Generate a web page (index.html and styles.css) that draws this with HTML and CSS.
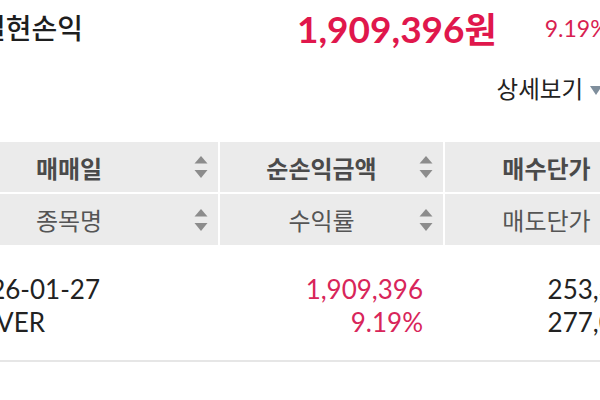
FILE: index.html
```html
<!DOCTYPE html>
<html lang="ko">
<head>
<meta charset="utf-8">
<title>실현손익</title>
<link rel="stylesheet" href="styles.css">
</head>
<body>
<div class="page">
  <div class="summary">
    <div class="title">실현손익</div>
    <div class="amount">1,909,396<span class="won">원</span></div>
    <div class="rate">9.19%</div>
  </div>
  <div class="detail">
    <span class="detail-label">상세보기</span>
    <svg class="detail-caret" width="12" height="9" viewBox="0 0 12 9"><polygon points="0,0 12,0 6,9" fill="#7f8e9c"/></svg>
  </div>
  <div class="table">
    <div class="th strong"><span class="label">매매일</span><svg class="sort" width="14" height="22" viewBox="0 0 14 22"><polygon points="7,0 13.5,7.5 0.5,7.5"/><polygon points="0.5,14 13.5,14 7,22"/></svg></div>
    <div class="th strong"><span class="label">순손익금액</span><svg class="sort" width="14" height="22" viewBox="0 0 14 22"><polygon points="7,0 13.5,7.5 0.5,7.5"/><polygon points="0.5,14 13.5,14 7,22"/></svg></div>
    <div class="th strong"><span class="label">매수단가</span><svg class="sort" width="14" height="22" viewBox="0 0 14 22"><polygon points="7,0 13.5,7.5 0.5,7.5"/><polygon points="0.5,14 13.5,14 7,22"/></svg></div>
    <div class="th"><span class="label">종목명</span><svg class="sort" width="14" height="22" viewBox="0 0 14 22"><polygon points="7,0 13.5,7.5 0.5,7.5"/><polygon points="0.5,14 13.5,14 7,22"/></svg></div>
    <div class="th"><span class="label">수익률</span><svg class="sort" width="14" height="22" viewBox="0 0 14 22"><polygon points="7,0 13.5,7.5 0.5,7.5"/><polygon points="0.5,14 13.5,14 7,22"/></svg></div>
    <div class="th"><span class="label">매도단가</span><svg class="sort" width="14" height="22" viewBox="0 0 14 22"><polygon points="7,0 13.5,7.5 0.5,7.5"/><polygon points="0.5,14 13.5,14 7,22"/></svg></div>
    <div class="td first"><div>2026-01-27</div><div>NAVER</div></div>
    <div class="td num red"><div>1,909,396</div><div>9.19%</div></div>
    <div class="td num last"><div>253,375</div><div>277,000</div></div>
  </div>
</div>
</body>
</html>
```
FILE: styles.css
```css
html, body {
  margin: 0;
  padding: 0;
  background: #ffffff;
  overflow: hidden;
}
body {
  width: 600px;
  height: 400px;
  font-family: "Noto Sans CJK KR", "Noto Sans", sans-serif;
  color: #222222;
}
.page {
  width: 726px;
  margin-left: -60px;
}
.summary {
  display: flex;
  align-items: center;
  height: 54px;
}
.title {
  width: 317px;
  margin-left: 40px;
  font-size: 28px;
  font-weight: 500;
  color: #1e1e1e;
}
.amount {
  font-family: "Lato", "Noto Sans CJK KR", sans-serif;
  font-size: 37px;
  font-weight: 700;
  color: #e0174c;
  margin-right: 48px;
}
.won {
  font-family: "Noto Sans CJK KR", sans-serif;
  font-weight: 700;
  font-size: 35px;
}
.rate {
  font-family: "Lato", sans-serif;
  font-size: 23px;
  color: #d81f52;
  padding-top: 2px;
}
.detail {
  display: flex;
  justify-content: flex-end;
  align-items: center;
  height: 36px;
  padding-right: 64px;
  margin-top: 16px;
}
.detail-label {
  font-size: 23.5px;
  color: #222222;
}
.detail-caret {
  margin-left: 7px;
  margin-top: 4px;
}
.table {
  display: grid;
  grid-template-columns: 278px 223px 223px;
  grid-template-rows: 50px 51px 115px;
  gap: 2px;
  margin-top: 36px;
}
.th {
  display: flex;
  align-items: center;
  background: #ebebeb;
  font-size: 24px;
  color: #555555;
}
.th.strong {
  font-weight: 700;
  color: #4a4a4a;
}
.label {
  flex: 1;
  text-align: center;
  padding-left: 8px;
}
.sort {
  fill: #8c8c8c;
  margin-right: 10px;
  margin-left: 4px;
}
.td {
  display: flex;
  flex-direction: column;
  justify-content: center;
  font-family: "Lato", sans-serif;
  font-size: 26px;
  line-height: 33px;
  color: #222222;
  border-bottom: 2px solid #e6e6e6;
  margin-right: -2px;
  padding-top: 4px;
}
.td.first {
  padding-left: 20px;
}
.td.num {
  text-align: right;
  padding-right: 22px;
}
.td.last {
  padding-right: 24px;
  margin-right: 0;
}
.red {
  color: #d8255a;
}
```
